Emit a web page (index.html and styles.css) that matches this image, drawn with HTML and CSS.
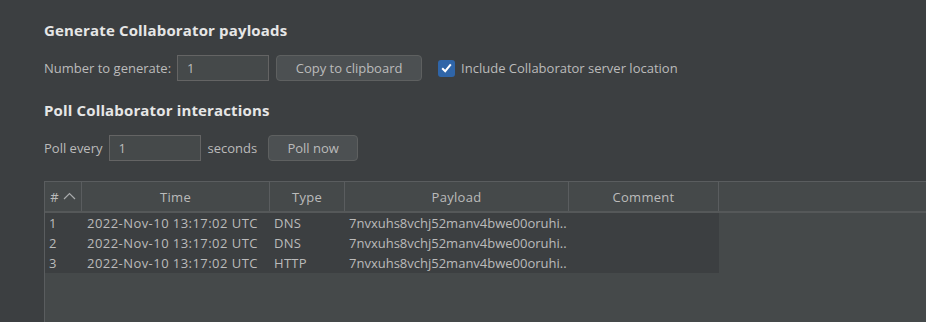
FILE: index.html
```html
<!DOCTYPE html>
<html lang="en">
<head>
    <meta charset="UTF-8">
    <title>Collaborator</title>
    <link rel="stylesheet" href="styles.css">
</head>
<body>

<div class="panel">
    <h2>Generate Collaborator payloads</h2>
    <div class="row">
        <span class="label">Number to generate:</span>
        <input type="text" class="field" value="1">
        <button class="btn btn-copy">Copy to clipboard</button>
        <label class="check">
            <span class="box">
                <svg width="11" height="10" viewBox="0 0 11 10"><path d="M1.2 5.2 L4.2 8.2 L9.8 1.4" fill="none" stroke="#ffffff" stroke-width="2"/></svg>
            </span>
            Include Collaborator server location
        </label>
    </div>

    <h2 class="second">Poll Collaborator interactions</h2>
    <div class="row">
        <span class="label">Poll every</span>
        <input type="text" class="field" value="1">
        <span class="label">seconds</span>
        <button class="btn btn-poll">Poll now</button>
    </div>
</div>

<div class="table">
    <div class="thead">
        <div class="th c-num"># <svg width="13" height="8" viewBox="0 0 13 8"><path d="M1 7 L6.5 1.5 L12 7" fill="none" stroke="#a9abad" stroke-width="1.2"/></svg></div>
        <div class="th c-time">Time</div>
        <div class="th c-type">Type</div>
        <div class="th c-payload">Payload</div>
        <div class="th c-comment">Comment</div>
        <div class="th c-rest"></div>
    </div>
    <div class="tbody">
        <div class="tr">
            <div class="td c-num">1</div>
            <div class="td c-time">2022-Nov-10 13:17:02 UTC</div>
            <div class="td c-type">DNS</div>
            <div class="td c-payload">7nvxuhs8vchj52manv4bwe00oruhi..</div>
            <div class="td c-comment"></div>
        </div>
        <div class="tr">
            <div class="td c-num">2</div>
            <div class="td c-time">2022-Nov-10 13:17:02 UTC</div>
            <div class="td c-type">DNS</div>
            <div class="td c-payload">7nvxuhs8vchj52manv4bwe00oruhi..</div>
            <div class="td c-comment"></div>
        </div>
        <div class="tr">
            <div class="td c-num">3</div>
            <div class="td c-time">2022-Nov-10 13:17:02 UTC</div>
            <div class="td c-type">HTTP</div>
            <div class="td c-payload">7nvxuhs8vchj52manv4bwe00oruhi..</div>
            <div class="td c-comment"></div>
        </div>
    </div>
</div>

</body>
</html>
```

FILE: styles.css
```css
* {
    box-sizing: border-box;
    margin: 0;
    padding: 0;
}
html {
    overflow: hidden;
}
body {
    font-family: 'Open Sans', sans-serif;
    font-size: 13px;
    color: #bbbbbb;
    background-color: #3c3f41;
    padding: 20px 0 0 44px;
    overflow: hidden;
    height: 322px;
}
h2 {
    font-size: 15px;
    line-height: 20px;
    font-weight: bold;
    letter-spacing: 0.15px;
    color: #e6e6e6;
    margin-bottom: 15px;
}
h2.second {
    margin-top: 19px;
}
.row {
    display: flex;
    align-items: center;
    height: 26px;
}
.label {
    margin-right: 6px;
}
.field {
    width: 92px;
    height: 26px;
    background-color: #45494a;
    border: 1px solid #646464;
    color: #bbbbbb;
    font-family: inherit;
    font-size: 13px;
    padding: 0 9px;
    margin-right: 7px;
    outline: none;
}
.btn {
    height: 26px;
    background-color: #4c5052;
    border: 1px solid #5e6060;
    border-radius: 4px;
    color: #bbbbbb;
    font-family: inherit;
    font-size: 13px;
}
.btn-copy {
    width: 146px;
    margin-right: 16px;
}
.btn-poll {
    width: 90px;
    margin-left: 5px;
}
.check {
    display: flex;
    align-items: center;
}
.box {
    width: 17px;
    height: 17px;
    background-color: #2f65a8;
    border-radius: 3px;
    margin-right: 6px;
    display: flex;
    align-items: center;
    justify-content: center;
}
.table {
    margin-top: 20px;
    height: 142px;
    background-color: #45494a;
    border-top: 1px solid #5a5d5f;
    border-left: 1px solid #5a5d5f;
}
.thead {
    display: flex;
    height: 31px;
    border-bottom: 2px solid #555859;
}
.th {
    display: flex;
    align-items: center;
    justify-content: center;
    border-right: 1px solid #5a5d5f;
    gap: 4px;
    letter-spacing: 0.3px;
}
.th.c-rest {
    flex: 1;
    border-right: none;
}
.th svg {
    margin-bottom: 2px;
}
.tbody {
    width: 674px;
    background-color: #3c3f41;
}
.tr {
    display: flex;
    height: 20px;
    line-height: 20px;
}
.td {
    padding-left: 5px;
    white-space: nowrap;
    overflow: hidden;
}
.c-num { width: 37px; }
.c-time { width: 188px; }
.c-type { width: 75px; }
.c-payload { width: 224px; }
.c-comment { width: 150px; }
.td.c-num { padding-left: 4px; }
.td.c-time { letter-spacing: 0.45px; }
.td.c-type { padding-left: 4px; letter-spacing: 0.3px; }
.td.c-payload { padding-left: 4px; }
```
